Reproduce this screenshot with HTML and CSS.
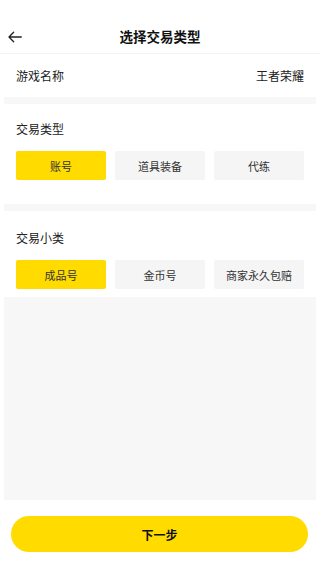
FILE: index.html
```html
<!DOCTYPE html>
<html lang="zh">
<head>
<meta charset="utf-8">
<meta name="viewport" content="width=device-width, initial-scale=1">
<link rel="stylesheet" href="styles.css">
<title>选择交易类型</title>
</head>
<body>
<div class="page">
  <header class="nav">
    <span class="back">
      <svg width="14" height="12" viewBox="0 0 14 12"><path d="M13.3 6H1.2M5.6 1.3L1 6l4.6 4.7" fill="none" stroke="#222" stroke-width="1.3" stroke-linecap="round" stroke-linejoin="round"/></svg>
    </span>
    <h1 class="title">选择交易类型</h1>
  </header>
  <div class="row">
    <span class="label">游戏名称</span>
    <span class="value">王者荣耀</span>
  </div>
  <div class="sep"></div>
  <section class="section first">
    <div class="sec-title">交易类型</div>
    <div class="opts">
      <div class="opt active">账号</div>
      <div class="opt">道具装备</div>
      <div class="opt">代练</div>
    </div>
  </section>
  <div class="sep"></div>
  <section class="section second">
    <div class="sec-title">交易小类</div>
    <div class="opts">
      <div class="opt active">成品号</div>
      <div class="opt">金币号</div>
      <div class="opt">商家永久包赔</div>
    </div>
  </section>
  <div class="filler"></div>
  <footer class="foot">
    <button class="next">下一步</button>
  </footer>
</div>
</body>
</html>
```
FILE: styles.css
```css
* { box-sizing: border-box; }
html, body { margin: 0; padding: 0; background: #fff; }
body {
  font-family: "Noto Sans CJK SC", "Noto Sans", sans-serif;
  color: #222;
}
.page {
  width: 320px;
  height: 568px;
  display: flex;
  flex-direction: column;
}
.nav {
  position: relative;
  height: 54px;
  padding-top: 20px;
  display: flex;
  align-items: center;
  justify-content: center;
  border-bottom: 1px solid #f3f3f3;
}
.back {
  position: absolute;
  left: 8px;
  top: 31px;
  width: 14px;
  height: 12px;
  display: flex;
}
.title {
  margin: 0;
  font-size: 13.5px;
  font-weight: 700;
  color: #111;
  line-height: 33px;
}
.row {
  height: 43px;
  padding: 0 16px;
  display: flex;
  align-items: center;
  justify-content: space-between;
  font-size: 12px;
  color: #222;
}
.sep {
  height: 7px;
  margin: 0 4px;
  background: #f7f7f7;
}
.section {
  padding: 0 16px;
}
.section.first { padding-top: 18px; padding-bottom: 24px; }
.section.second { padding-top: 20px; padding-bottom: 8px; }
.sec-title {
  font-size: 12px;
  line-height: 14px;
  color: #222;
}
.opts {
  margin-top: 15px;
  display: grid;
  grid-template-columns: repeat(3, 90px);
  column-gap: 9px;
}
.opt {
  height: 29px;
  border-radius: 2px;
  background: #f5f5f5;
  display: flex;
  align-items: center;
  justify-content: center;
  font-size: 11px;
  color: #333;
}
.opt.active {
  background: #ffdb00;
  color: #333;
}
.filler {
  flex: 1;
  margin: 0 4px;
  background: #f7f7f7;
}
.foot {
  height: 68px;
  padding: 16px 12px 16px 11px;
}
.next {
  width: 297px;
  height: 36px;
  border: 0;
  border-radius: 18px;
  background: #ffdb00;
  font-family: inherit;
  font-size: 12px;
  font-weight: 700;
  color: #111;
  padding: 0;
}
```
